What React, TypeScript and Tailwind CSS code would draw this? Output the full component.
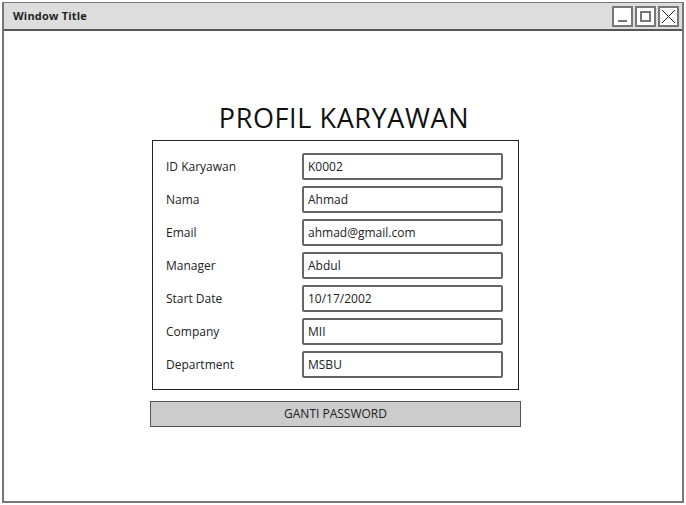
const fields = [
  { label: 'ID Karyawan', value: 'K0002' },
  { label: 'Nama', value: 'Ahmad' },
  { label: 'Email', value: 'ahmad@gmail.com' },
  { label: 'Manager', value: 'Abdul' },
  { label: 'Start Date', value: '10/17/2002' },
  { label: 'Company', value: 'MII' },
  { label: 'Department', value: 'MSBU' },
];

const font = { fontFamily: '"Comic Sans MS", "Open Sans", "DejaVu Sans", sans-serif' };

function WinButton({ children }: { children: React.ReactNode }) {
  return (
    <div className="w-[21px] h-[21px] border-2 border-[#777] bg-white flex items-center justify-center">
      {children}
    </div>
  );
}

export default function App() {
  return (
    <div className="w-[686px] h-[505px] bg-white p-[2px]" style={font}>
      <div className="w-full h-[501px] border-2 border-[#777] border-t-[1px] flex flex-col">
        {/* title bar */}
        <div className="h-[28px] bg-[#dddddd] border-b-2 border-[#555] flex items-center justify-between pl-[9px] pr-[3px]">
          <span className="text-[11px] font-bold text-[#222] tracking-[0.2px]">Window Title</span>
          <div className="flex gap-[2px]">
            <WinButton>
              <div className="w-[9px] h-[2px] bg-[#777] mt-[10px]" />
            </WinButton>
            <WinButton>
              <div className="w-[11px] h-[11px] border-2 border-[#777]" />
            </WinButton>
            <WinButton>
              <svg width="15" height="15" viewBox="0 0 15 15">
                <path d="M1 1L14 14M14 1L1 14" stroke="#222" strokeWidth="1" />
              </svg>
            </WinButton>
          </div>
        </div>

        {/* content */}
        <div className="flex flex-col pt-[73px]">
          <h1 className="text-[27px] text-[#111] leading-none tracking-[0.6px] text-center ml-[2px]">PROFIL KARYAWAN</h1>
          <div className="mt-[9px] ml-[148px] w-[367px] h-[250px] border border-[#222] pt-[12px] pl-[13px] pr-[15px] flex flex-col gap-[6px]">
            {fields.map((f) => (
              <div key={f.label} className="flex items-center">
                <span className="w-[136px] text-[12px] text-[#222]">{f.label}</span>
                <div className="w-[201px] h-[27px] border-2 border-[#666] rounded-[2px] flex items-center px-[4px] text-[12px] text-[#222]">
                  {f.value}
                </div>
              </div>
            ))}
          </div>
          <div className="mt-[11px] ml-[146px] w-[371px] h-[26px] bg-[#cccccc] border border-[#555] flex items-center justify-center text-[12px] text-[#222]">
            GANTI PASSWORD
          </div>
        </div>
      </div>
    </div>
  );
}
